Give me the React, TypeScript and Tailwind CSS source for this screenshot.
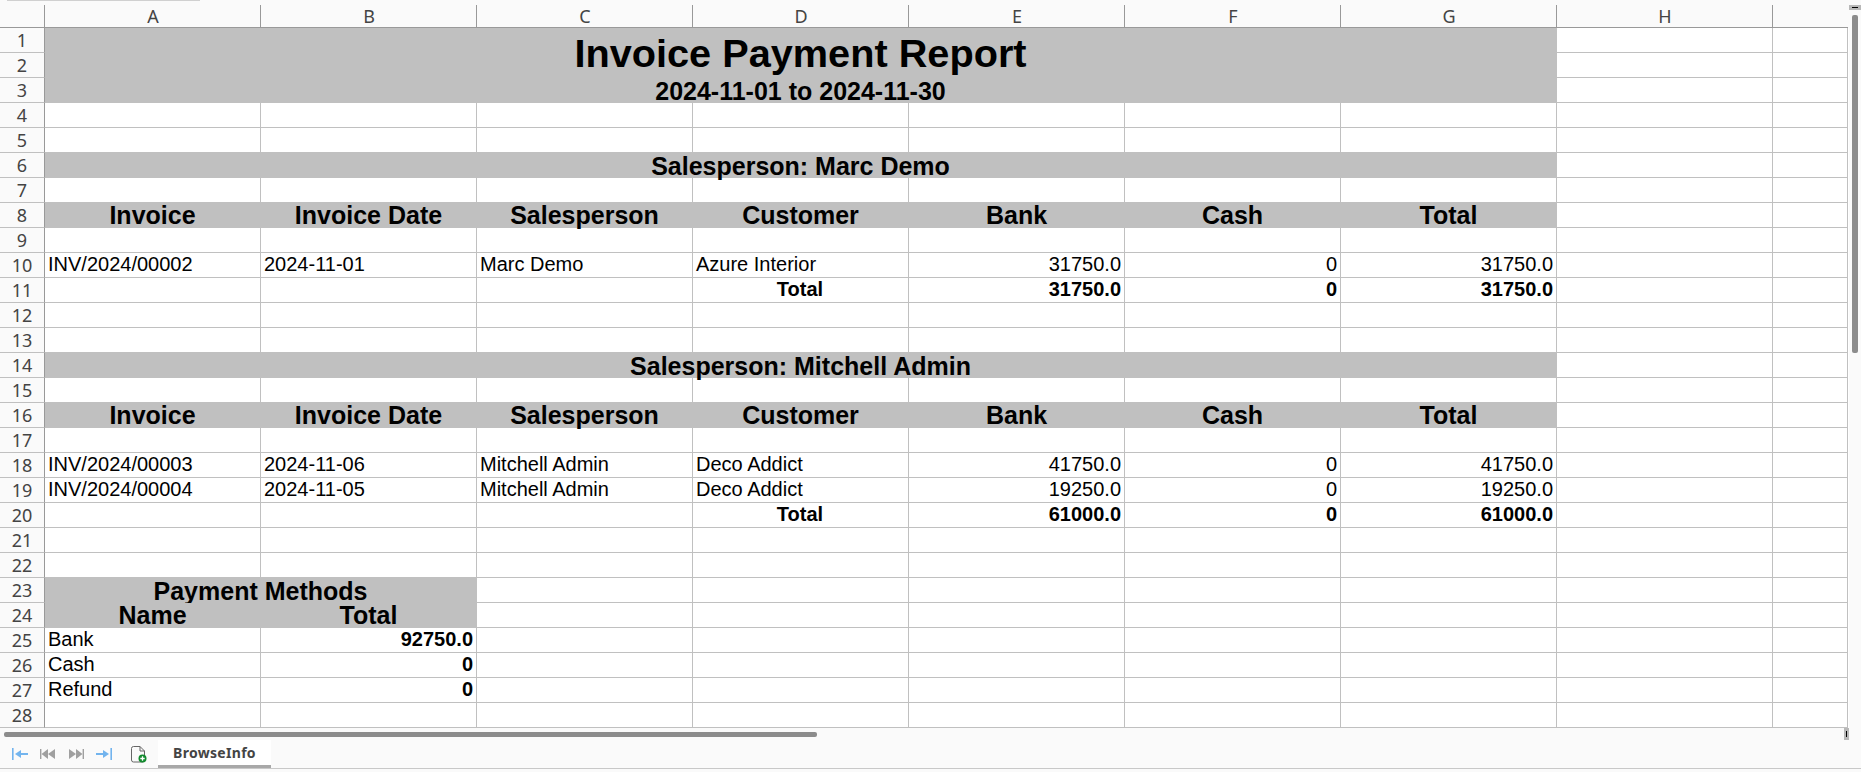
import React from "react";

const cols = ["A", "B", "C", "D", "E", "F", "G", "H"];
const gray = "bg-[#c0c0c0] border-[#c0c0c0]";

type CellDef = { text?: string; span?: number; rows?: number; kind?: string };

const tableHead: CellDef[] = [
  { text: "Invoice", kind: "head" },
  { text: "Invoice Date", kind: "head" },
  { text: "Salesperson", kind: "head" },
  { text: "Customer", kind: "head" },
  { text: "Bank", kind: "head" },
  { text: "Cash", kind: "head" },
  { text: "Total", kind: "head" },
  {},
  {},
];

const blank: CellDef[] = [{}, {}, {}, {}, {}, {}, {}, {}, {}];

const line = (a: string, b: string, c: string, d: string, e: string, f: string, g: string): CellDef[] => [
  { text: a },
  { text: b },
  { text: c },
  { text: d },
  { text: e, kind: "num" },
  { text: f, kind: "num" },
  { text: g, kind: "num" },
  {},
  {},
];

const total = (e: string, f: string, g: string): CellDef[] => [
  {},
  {},
  {},
  { text: "Total", kind: "totalLabel" },
  { text: e, kind: "numBold" },
  { text: f, kind: "numBold" },
  { text: g, kind: "numBold" },
  {},
  {},
];

const section = (name: string): CellDef[] => [{ text: name, span: 7, kind: "section" }, {}, {}];

const rest: CellDef[] = [{}, {}, {}, {}, {}, {}, {}];

const sheet: CellDef[][] = [
  [{ text: "Invoice Payment Report", span: 7, rows: 2, kind: "title" }, {}, {}],
  [{}, {}],
  [{ text: "2024-11-01 to 2024-11-30", span: 7, kind: "subtitle" }, {}, {}],
  blank,
  blank,
  section("Salesperson: Marc Demo"),
  blank,
  tableHead,
  blank,
  line("INV/2024/00002", "2024-11-01", "Marc Demo", "Azure Interior", "31750.0", "0", "31750.0"),
  total("31750.0", "0", "31750.0"),
  blank,
  blank,
  section("Salesperson: Mitchell Admin"),
  blank,
  tableHead,
  blank,
  line("INV/2024/00003", "2024-11-06", "Mitchell Admin", "Deco Addict", "41750.0", "0", "41750.0"),
  line("INV/2024/00004", "2024-11-05", "Mitchell Admin", "Deco Addict", "19250.0", "0", "19250.0"),
  total("61000.0", "0", "61000.0"),
  blank,
  blank,
  [{ text: "Payment Methods", span: 2, kind: "pmTitle" }, ...rest],
  [{ text: "Name", kind: "pmHead" }, { text: "Total", kind: "pmHead" }, ...rest],
  [{ text: "Bank" }, { text: "92750.0", kind: "numBold" }, ...rest],
  [{ text: "Cash" }, { text: "0", kind: "numBold" }, ...rest],
  [{ text: "Refund" }, { text: "0", kind: "numBold" }, ...rest],
  blank,
];

const Cell = ({ cell }: { cell: CellDef }) => {
  const base = "border-r border-b border-[#c0c0c0] min-w-0 whitespace-nowrap text-black leading-[22px]";
  const k = cell.kind;
  if (k === "title")
    return <div className={`col-span-7 row-span-2 ${gray} border-b border-r text-center text-[39.7px] font-bold leading-[50px]`}>{cell.text}</div>;
  if (k === "subtitle" || k === "section")
    return <div className={`col-span-7 ${gray} border-b border-r text-center text-[25px] font-bold leading-[26px]`}>{cell.text}</div>;
  if (k === "head" || k === "pmHead")
    return <div className={`${gray} border-b border-r text-center text-[25px] font-bold leading-[24px]`}>{cell.text}</div>;
  if (k === "pmTitle")
    return <div className={`col-span-2 ${gray} border-b border-r text-center text-[25px] font-bold leading-[26px]`}>{cell.text}</div>;
  if (k === "num") return <div className={`${base} text-right text-[20px] pr-[3px]`}>{cell.text}</div>;
  if (k === "numBold") return <div className={`${base} text-right text-[20px] font-bold pr-[3px]`}>{cell.text}</div>;
  if (k === "totalLabel") return <div className={`${base} text-center text-[20px] font-bold pr-[1px]`}>{cell.text}</div>;
  return <div className={`${base} text-[20px] pl-[3px]`}>{cell.text}</div>;
};

const NavArrow = ({ dir, color }: { dir: "l" | "r"; color: string }) => (
  <svg width="16" height="14" viewBox="0 0 16 14" fill="none" className={dir === "r" ? "-scale-x-100" : ""}>
    <rect x="0" y="1" width="1.6" height="12" fill={color} />
    <path d="M3 7 L9 3 V6 H16 V8 H9 V11 Z" fill={color} />
  </svg>
);

const SkipIcon = ({ flip }: { flip?: boolean }) => (
  <svg width="15" height="12" viewBox="0 0 15 12" className={flip ? "-scale-x-100" : ""}>
    <rect x="0" y="1" width="1.4" height="10" fill="#a0a0a0" />
    <path d="M1.5 6 L8 1 V11 Z" fill="#a0a0a0" />
    <path d="M8 6 L15 1 V11 Z" fill="#a0a0a0" />
  </svg>
);

export default function App() {
  return (
    <div className="w-[1861px] h-[772px] overflow-hidden flex flex-col bg-[#fafafa] font-['Liberation_Sans',Arial,sans-serif]">
      <div className="h-[5px] shrink-0 flex">
        <div className="ml-[7px] w-[193px] h-[1px] bg-[#d0d0d0]" />
      </div>
      <div className="flex flex-1 min-h-0">
        <div className="w-[1849px] flex flex-col">
          <div className="grid grid-cols-[45px_repeat(8,216px)_75px] auto-rows-[23px]">
            <div className="border-r border-b border-[#999]" />
            {cols.map((c) => (
              <div key={c} className="pl-[1px] border-r border-b border-[#999] text-center text-[18px] leading-[22px] text-[#444] font-['Noto_Sans',sans-serif]">
                {c}
              </div>
            ))}
            <div className="border-b border-[#999]" />
          </div>
          <div className="grid grid-cols-[45px_repeat(8,216px)_75px] auto-rows-[25px] bg-white">
            {sheet.map((row, i) => (
              <React.Fragment key={i}>
                <div className="bg-[#fafafa] border-r border-b border-r-[#999] border-b-[#c0c0c0] text-center text-[18px] leading-[24px] text-[#444] font-['Noto_Sans',sans-serif]">
                  {i + 1}
                </div>
                {row.map((cell, j) => (
                  <Cell key={j} cell={cell} />
                ))}
              </React.Fragment>
            ))}
          </div>
          <div className="h-[12px] shrink-0 flex items-center justify-between bg-[#fafafa]">
            <div className="ml-[4px] w-[813px] h-[5px] rounded-[2px] bg-[#8c8c8c]" />
            <div className="w-[5px] h-[12px] bg-[#b8b8b8] flex items-center justify-center">
              <div className="w-[1px] h-[6px] bg-black" />
            </div>
          </div>
          <div className="h-[28px] shrink-0 flex items-center">
            <div className="ml-[12px] mr-[19px] flex items-center">
              <NavArrow dir="l" color="#72b4ee" />
              <div className="ml-[12px]">
                <SkipIcon />
              </div>
              <div className="ml-[14px]">
                <SkipIcon flip />
              </div>
              <div className="ml-[12px]">
                <NavArrow dir="r" color="#72b4ee" />
              </div>
            </div>
            <svg width="16" height="17" viewBox="0 0 16 17" fill="none">
              <path d="M0.5 2.5 a2 2 0 0 1 2-2 H9 L13.5 5 V14 a2 2 0 0 1-2 2 H2.5 a2 2 0 0 1-2-2 Z" stroke="#666" strokeWidth="1" fill="#fafafa" />
              <path d="M9 0.5 V5 H13.5" stroke="#666" strokeWidth="1" fill="none" />
              <circle cx="11.5" cy="12.5" r="4" fill="#128a2e" />
              <path d="M9.3 12.5 H13.7 M11.5 10.3 V14.7" stroke="#fff" strokeWidth="1.3" />
            </svg>
            <div className="ml-[11px] w-[113px] h-[28px] bg-white border-b-[3px] border-[#a8a8a8] text-center text-[14px] font-bold leading-[26px] tracking-[0.3px] text-[#444] font-['Noto_Sans',sans-serif]">
              BrowseInfo
            </div>
          </div>
        </div>
        <div className="w-[12px] flex flex-col items-center">
          <div className="w-full h-[5px] bg-[#b8b8b8] flex items-center justify-center">
            <div className="w-[6px] h-[1px] bg-black" />
          </div>
          <div className="mt-[5px] w-[6px] h-[338px] rounded-[2px] bg-[#8c8c8c]" />
        </div>
      </div>
      <div className="h-[4px] shrink-0 border-t border-[#c8c8c8] bg-[#fafafa]" />
    </div>
  );
}
